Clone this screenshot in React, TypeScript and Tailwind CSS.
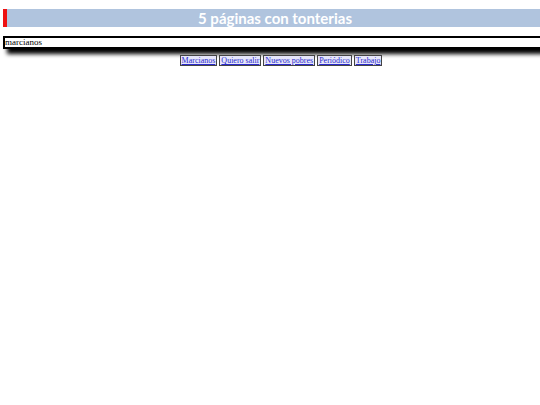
export default function App() {
  const links = ["Marcianos", "Quiero salir", "Nuevos pobres", "Periódico", "Trabajo"];
  return (
    <div className="min-h-[405px] w-[540px] overflow-hidden bg-white font-['Liberation_Serif',serif]">
      <div className="ml-[3px] mt-[9px] flex h-[18px] w-[540px] items-center justify-center border-l-4 border-[#ee1111] bg-[#b0c4de]">
        <span className="font-['Lato',sans-serif] text-[15px] font-bold leading-none text-white">
          5 páginas con tonterias
        </span>
      </div>
      <div className="ml-[3px] mt-[9px] h-[13px] w-[560px] border-2 border-black bg-white text-[9px] leading-[9px] text-black shadow-[4px_5px_4px_#000]">
        marcianos
      </div>
      <div className="mt-[6px] flex justify-center gap-[2px] pl-[22px] text-[8px] leading-[9px]">
        {links.map((l) => (
          <a key={l} href="#" className="border border-[#444] bg-[#e6e6fa] px-[1px] text-[#2a2acc] underline">
            {l}
          </a>
        ))}
      </div>
    </div>
  );
}
